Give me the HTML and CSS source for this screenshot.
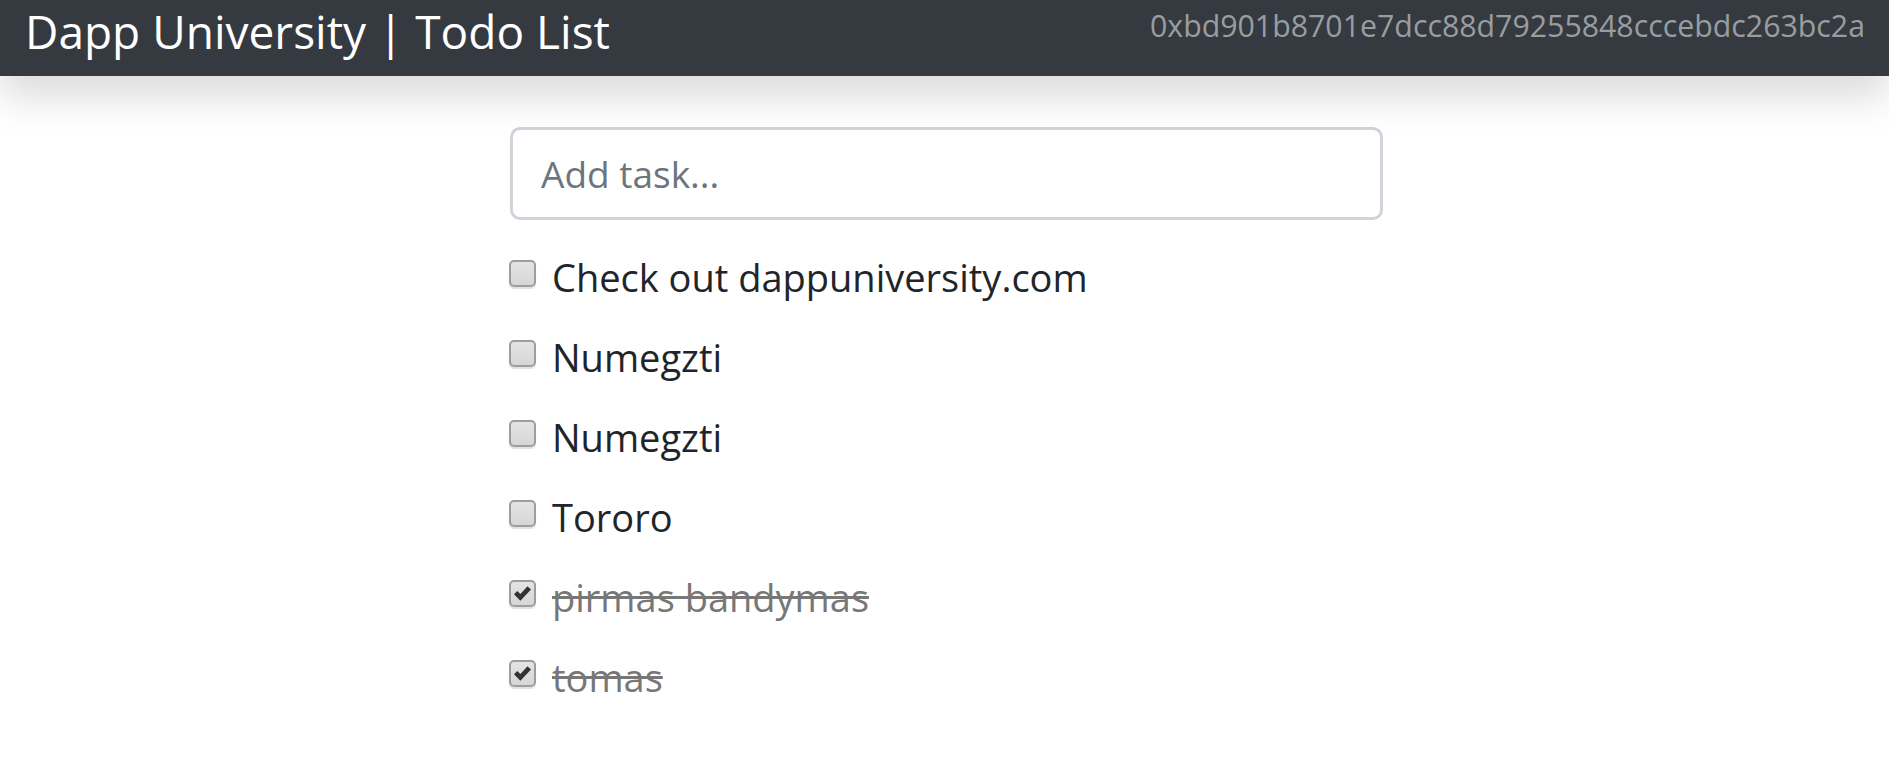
FILE: index.html
```html
<!DOCTYPE html>
<html>
<head>
<meta charset="utf-8">
<link rel="stylesheet" href="styles.css">
</head>
<body>
<nav class="navbar">
  <a class="brand" href="#">Dapp University | Todo List</a>
  <small class="account">0xbd901b8701e7dcc88d79255848cccebdc263bc2a</small>
</nav>
<main class="content">
  <form class="task-form">
    <input class="task-input" type="text" placeholder="Add task...">
  </form>
  <ul class="task-list">
    <li class="task"><span class="box"></span><span class="label">Check out dappuniversity.com</span></li>
    <li class="task"><span class="box"></span><span class="label">Numegzti</span></li>
    <li class="task"><span class="box"></span><span class="label">Numegzti</span></li>
    <li class="task"><span class="box"></span><span class="label">Tororo</span></li>
    <li class="task done"><span class="box"><svg class="tick" viewBox="0 0 16 16"><path d="M0.8 8.6 L3.6 5.8 L6.2 8.4 L12.2 1.8 L15.2 4.6 L6.2 14.2 Z" fill="#333"/></svg></span><span class="label">pirmas bandymas</span></li>
    <li class="task done"><span class="box"><svg class="tick" viewBox="0 0 16 16"><path d="M0.8 8.6 L3.6 5.8 L6.2 8.4 L12.2 1.8 L15.2 4.6 L6.2 14.2 Z" fill="#333"/></svg></span><span class="label">tomas</span></li>
  </ul>
</main>
</body>
</html>
```

FILE: styles.css
```css
html, body {
  margin: 0;
  padding: 0;
  background: #fff;
}
body {
  font-family: "Open Sans", "Noto Sans", sans-serif;
  color: #212529;
}
.navbar {
  height: 76px;
  background: #343a40;
  display: flex;
  justify-content: space-between;
  align-items: flex-start;
  box-shadow: 0 20px 40px rgba(0, 0, 0, 0.15);
  position: relative;
  z-index: 2;
}
.brand {
  color: #fff;
  text-decoration: none;
  font-size: 46px;
  line-height: 60px;
  padding-left: 25px;
  padding-top: 1px;
}
.account {
  color: #9a9da0;
  font-size: 30.3px;
  line-height: 50px;
  padding-right: 24px;
  padding-top: 1px;
}
.content {
  width: 873px;
  margin: 51px auto 0;
  padding-left: 4px;
}
.task-form {
  margin: 0;
}
.task-input {
  box-sizing: border-box;
  width: 100%;
  height: 93px;
  border: 3px solid #ced4da;
  border-radius: 10px;
  padding: 0 28px;
  font-family: inherit;
  font-size: 37px;
  color: #495057;
  outline: none;
}
.task-input::placeholder {
  color: #6c757d;
}
.task-list {
  list-style: none;
  margin: 17px 0 0 -1px;
  padding: 0;
}
.task {
  height: 80px;
  display: flex;
  align-items: center;
}
.box {
  box-sizing: border-box;
  width: 27px;
  height: 27px;
  border: 2px solid #9d9d9d;
  border-radius: 5px;
  background: linear-gradient(#e4e4e4, #d6d6d6);
  box-shadow: 0 2px 1px #e2e2e2;
  margin: 0 16px 8px 0;
  display: flex;
  align-items: center;
  justify-content: center;
}
.tick {
  width: 19px;
  height: 19px;
}
.label {
  font-size: 38px;
  line-height: 56px;
}
.done .label {
  color: #777;
  text-decoration: line-through;
}
```
